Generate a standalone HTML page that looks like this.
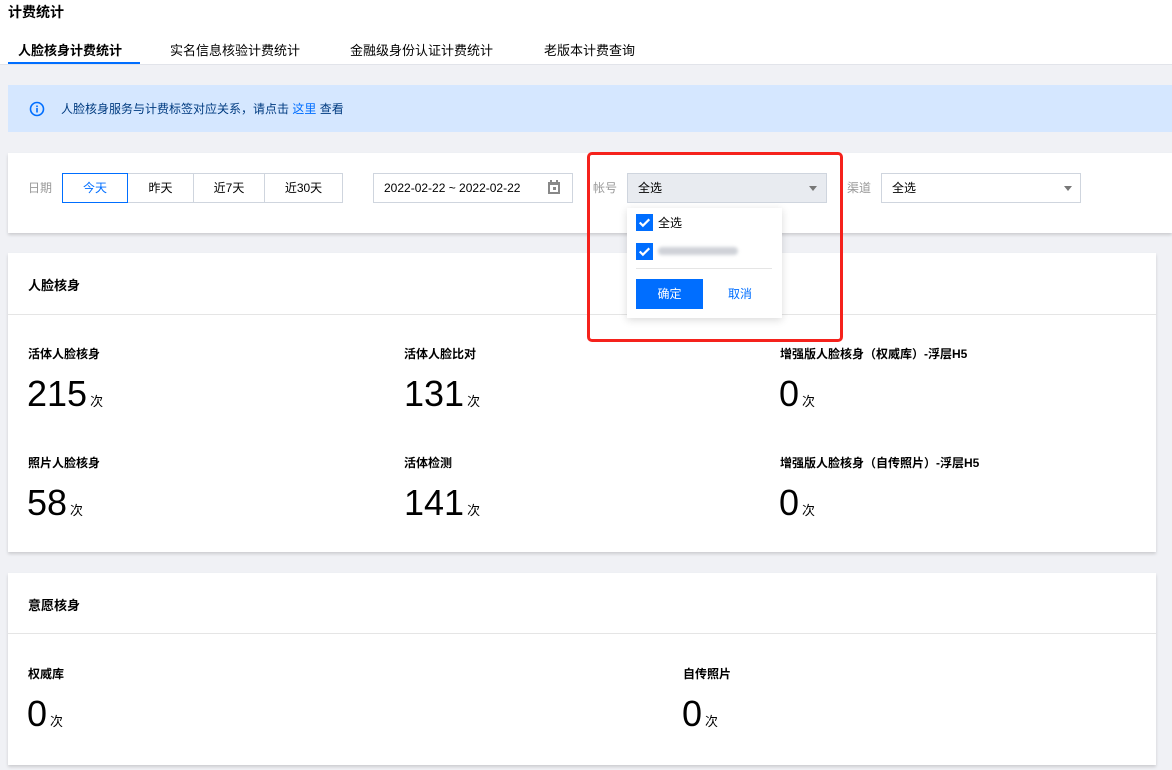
<!DOCTYPE html>
<html><head><meta charset="utf-8"><style>
*{margin:0;padding:0;box-sizing:border-box}
body{width:1172px;height:770px;background:#f0f1f5;font-family:"Liberation Sans","Noto Sans CJK SC",sans-serif;font-size:12px;color:#000;position:relative;overflow:hidden}
.abs{position:absolute}
.head{left:0;top:0;width:1172px;height:65px;background:#fff;border-bottom:1px solid #e2e4ea}
.card{background:#fff;box-shadow:0 2px 3px rgba(0,0,0,.15)}
.lbl{font-size:12px;font-weight:bold;color:#000}
.num{font-size:36px;color:#000;line-height:1}
.num small{font-size:13px;margin-left:3px}
.btn{position:absolute;top:173px;height:30px;border:1px solid #cfd5de;background:#fff;text-align:center;line-height:28px;font-size:12px;color:#000}
</style></head><body>
<div class="abs head"></div>
<div class="abs" style="left:8px;top:2px;font-size:14px;font-weight:bold">计费统计</div>
<div class="abs" style="left:18px;top:40px;font-size:13px;font-weight:bold">人脸核身计费统计</div>
<div class="abs" style="left:8px;top:62px;width:132px;height:2px;background:#006eff"></div>
<div class="abs" style="left:170px;top:40px;font-size:13px">实名信息核验计费统计</div>
<div class="abs" style="left:350px;top:40px;font-size:13px">金融级身份认证计费统计</div>
<div class="abs" style="left:544px;top:40px;font-size:13px">老版本计费查询</div>

<div class="abs" style="left:8px;top:85px;width:1164px;height:47px;background:#d5e7ff"></div>
<svg class="abs" style="left:29px;top:101px" width="16" height="16" viewBox="0 0 16 16"><circle cx="8" cy="8" r="6.5" fill="none" stroke="#006eff" stroke-width="1.6"/><rect x="7.2" y="7" width="1.6" height="4.5" fill="#006eff"/><rect x="7.2" y="4.5" width="1.6" height="1.6" fill="#006eff"/></svg>
<div class="abs" style="left:61px;top:100px;color:#003b80;font-size:12px">人脸核身服务与计费标签对应关系，请点击 <span style="color:#006eff">这里</span> 查看</div>

<div class="abs card" style="left:8px;top:153px;width:1164px;height:80px"></div>
<div class="abs" style="left:28px;top:179px;color:#999">日期</div>
<div class="btn" style="left:62px;width:66px;border-color:#006eff;color:#006eff;z-index:2">今天</div>
<div class="btn" style="left:127px;width:67px">昨天</div>
<div class="btn" style="left:193px;width:72px">近7天</div>
<div class="btn" style="left:264px;width:79px">近30天</div>
<div class="btn" style="left:373px;width:200px;text-align:left;padding-left:10px">2022-02-22 ~ 2022-02-22</div>
<svg class="abs" style="left:547px;top:179px" width="14" height="16" viewBox="0 0 14 16"><rect x="1" y="3" width="12" height="12" fill="#888"/><rect x="3" y="6" width="8" height="7" fill="#fff"/><rect x="3" y="1" width="2" height="3" fill="#888"/><rect x="9" y="1" width="2" height="3" fill="#888"/><rect x="6" y="8" width="3" height="3" fill="#888"/></svg>
<div class="abs" style="left:593px;top:179px;color:#999">帐号</div>
<div class="btn" style="left:627px;width:200px;background:#e8ebf0;text-align:left;padding-left:10px">全选</div>
<div class="abs" style="left:809px;top:186px;border:4px solid transparent;border-top:5px solid #777;border-bottom:0;width:0"></div>
<div class="abs" style="left:847px;top:179px;color:#999">渠道</div>
<div class="btn" style="left:881px;width:200px;text-align:left;padding-left:10px">全选</div>
<div class="abs" style="left:1064px;top:186px;border:4px solid transparent;border-top:5px solid #777;border-bottom:0;width:0"></div>

<div class="abs card" style="left:8px;top:253px;width:1148px;height:299px"></div>
<div class="abs" style="left:8px;top:314px;width:1148px;height:1px;background:#e5e5e5"></div>
<div class="abs" style="left:28px;top:275px;font-size:13px;font-weight:bold">人脸核身</div>
<div class="abs lbl" style="left:28px;top:345px">活体人脸核身</div>
<div class="abs num" style="left:27px;top:376px">215<small>次</small></div>
<div class="abs lbl" style="left:404px;top:345px">活体人脸比对</div>
<div class="abs num" style="left:404px;top:376px">131<small>次</small></div>
<div class="abs lbl" style="left:780px;top:345px">增强版人脸核身（权威库）-浮层H5</div>
<div class="abs num" style="left:779px;top:376px">0<small>次</small></div>
<div class="abs lbl" style="left:28px;top:454px">照片人脸核身</div>
<div class="abs num" style="left:27px;top:485px">58<small>次</small></div>
<div class="abs lbl" style="left:404px;top:454px">活体检测</div>
<div class="abs num" style="left:404px;top:485px">141<small>次</small></div>
<div class="abs lbl" style="left:780px;top:454px">增强版人脸核身（自传照片）-浮层H5</div>
<div class="abs num" style="left:779px;top:485px">0<small>次</small></div>

<div class="abs card" style="left:8px;top:573px;width:1148px;height:192px"></div>
<div class="abs" style="left:8px;top:633px;width:1148px;height:1px;background:#e5e5e5"></div>
<div class="abs" style="left:28px;top:595px;font-size:13px;font-weight:bold">意愿核身</div>
<div class="abs lbl" style="left:28px;top:665px">权威库</div>
<div class="abs num" style="left:27px;top:696px">0<small>次</small></div>
<div class="abs lbl" style="left:683px;top:665px">自传照片</div>
<div class="abs num" style="left:682px;top:696px">0<small>次</small></div>

<div class="abs" style="left:627px;top:208px;width:155px;height:110px;background:#fff;box-shadow:0 2px 8px rgba(0,0,0,.15)"></div>
<svg class="abs" style="left:636px;top:214px" width="17" height="17" viewBox="0 0 16 16"><rect width="16" height="16" fill="#006eff"/><path d="M3.5 8l3 3 6-6" stroke="#fff" stroke-width="2" fill="none"/></svg>
<div class="abs" style="left:658px;top:214px;font-size:12px">全选</div>
<svg class="abs" style="left:636px;top:243px" width="17" height="17" viewBox="0 0 16 16"><rect width="16" height="16" fill="#006eff"/><path d="M3.5 8l3 3 6-6" stroke="#fff" stroke-width="2" fill="none"/></svg>
<div class="abs" style="left:658px;top:247px;width:80px;height:8px;background:#cfd2d8;border-radius:4px;filter:blur(1.5px)"></div>
<div class="abs" style="left:636px;top:268px;width:136px;height:1px;background:#e5e5e5"></div>
<div class="abs" style="left:636px;top:279px;width:67px;height:30px;background:#006eff;color:#fff;text-align:center;line-height:30px">确定</div>
<div class="abs" style="left:728px;top:285px;color:#006eff">取消</div>
<div class="abs" style="left:587px;top:152px;width:256px;height:190px;border:3px solid #f5221c;border-radius:5px"></div>
</body></html>
